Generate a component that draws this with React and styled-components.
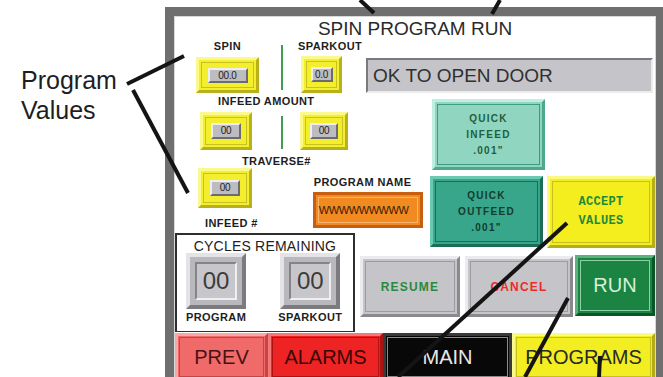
import React from "react";
import styled, { createGlobalStyle } from "styled-components";

const GlobalStyle = createGlobalStyle`
  body {
    margin: 0;
    background: #ffffff;
    font-family: "Liberation Sans", Arial, sans-serif;
    overflow: hidden;
  }
  * { box-sizing: border-box; }
`;

const Page = styled.div`
  position: relative;
  display: flex;
  width: 663px;
  height: 377px;
  overflow: hidden;
  background: #ffffff;
`;

const CalloutText = styled.div`
  width: 165px;
  flex-shrink: 0;
  padding: 65px 0 0 21px;
  font-size: 25px;
  line-height: 30px;
  color: #1e1e1e;
`;

const Panel = styled.div`
  flex: 1;
  margin-top: 7px;
  height: 390px;
  padding: 10px 8px 0 10px;
  background: #6f6f6f;
`;

const Screen = styled.div`
  height: 100%;
  background: #ffffff;
  box-shadow: 0 0 0 1px #d8d8d8;
  display: flex;
  flex-direction: column;
`;

const Title = styled.div`
  height: 23px;
  line-height: 23px;
  text-align: center;
  font-size: 19px;
  color: #2a2a2a;
`;

const Body = styled.div`
  display: grid;
  grid-template-columns: 183px 70px 227px;
  grid-template-rows: 55px 138px 17px 82px;
  grid-template-areas:
    "v1 st st"
    "lv lv qk"
    "cy . qk"
    "cy ac ac";
`;

const Area = styled.div`
  grid-area: ${(p) => p.$area};
  display: flex;
  flex-direction: ${(p) => p.$dir || "column"};
  align-items: flex-start;
  padding: ${(p) => p.$pad || "0"};
  & > * { flex-shrink: 0; }
`;

const Row = styled.div`
  display: flex;
  align-items: flex-start;
  margin-top: ${(p) => p.$top || 0}px;
  margin-left: ${(p) => p.$left || 0}px;
  gap: ${(p) => p.$gap || 0}px;
  & > * { flex-shrink: 0; }
`;

const Col = styled.div`
  display: flex;
  flex-direction: column;
  align-items: ${(p) => p.$align || "flex-start"};
  margin-left: ${(p) => p.$left || 0}px;
  width: ${(p) => (p.$w ? `${p.$w}px` : "auto")};
  flex-shrink: 0;
`;

const Label = styled.div`
  font-size: 11px;
  font-weight: bold;
  letter-spacing: 0.4px;
  line-height: 12px;
  color: #1e1e1e;
  white-space: nowrap;
  margin-top: ${(p) => p.$top || 0}px;
  margin-left: ${(p) => p.$left || 0}px;
`;

const Divider = styled.div`
  width: 2px;
  flex-shrink: 0;
  height: ${(p) => p.$h}px;
  margin-top: ${(p) => p.$top}px;
  margin-left: ${(p) => p.$left}px;
  background: #3f9c52;
`;

const ValueBox = styled.div`
  width: ${(p) => p.$w}px;
  height: ${(p) => p.$h}px;
  margin-top: ${(p) => p.$top || 0}px;
  margin-left: ${(p) => p.$left || 0}px;
  background: #f3ef2e;
  border: 3px solid;
  border-color: #fbf98e #b9b11c #b9b11c #fbf98e;
  box-shadow: inset 0 0 0 2px #f3ef2e, inset 0 0 0 3px #c9c120;
  display: flex;
  align-items: center;
  justify-content: center;
`;

const Display = styled.div`
  width: ${(p) => p.$w}px;
  height: ${(p) => p.$h}px;
  background: #bdbdc1;
  border: 2px solid;
  border-color: #eeeeee #6c6c70 #6c6c70 #eeeeee;
  font-size: 10px;
  line-height: ${(p) => p.$h - 4}px;
  text-align: center;
  color: #222222;
  letter-spacing: -0.3px;
`;

const HmiButton = styled.div`
  width: ${(p) => p.$w}px;
  height: ${(p) => p.$h}px;
  margin-top: ${(p) => p.$top || 0}px;
  margin-left: ${(p) => p.$left || 0}px;
  background: ${(p) => p.$bg};
  border: 3px solid;
  border-color: ${(p) => `${p.$light} ${p.$dark} ${p.$dark} ${p.$light}`};
  box-shadow: inset 0 0 0 2px ${(p) => p.$bg}, inset 0 0 0 3px ${(p) => p.$line};
  display: flex;
  flex-direction: column;
  align-items: center;
  justify-content: center;
  text-align: center;
  color: ${(p) => p.$color || "#222"};
  flex-shrink: 0;
`;

const Status = styled.div`
  width: 287px;
  height: 35px;
  margin: 18px 0 0 8px;
  background: #c5c5c9;
  border: 2px solid;
  border-color: #7a7a7e #ececec #ececec #7a7a7e;
  padding-left: 5px;
  font-size: 19px;
  line-height: 31px;
  color: #303030;
  white-space: nowrap;
`;

const NameText = styled.div`
  font-size: 11px;
  letter-spacing: -0.4px;
  color: #3a1a00;
  align-self: flex-start;
  margin-left: 3px;
`;

const QuickText = styled.div`
  font-size: 10px;
  font-weight: bold;
  letter-spacing: 1.3px;
  line-height: 16px;
  color: ${(p) => p.$color};
`;

const AcceptText = styled.div`
  font-family: "Liberation Mono", monospace;
  font-weight: bold;
  font-size: 12px;
  line-height: 19px;
  letter-spacing: 0.3px;
  color: #1f8a3a;
`;

const ActionText = styled.div`
  font-size: 12px;
  font-weight: bold;
  letter-spacing: 1.2px;
  color: ${(p) => p.$color};
`;

const RunText = styled.div`
  font-size: 20px;
  color: #d6f0d8;
`;

const CyclesBox = styled.div`
  grid-area: cy;
  width: 180px;
  height: 99px;
  border: 2px solid #2e2e2e;
  border-bottom-width: 1px;
  display: flex;
  flex-direction: column;
`;

const CyclesTitle = styled.div`
  margin-top: 4px;
  font-size: 14px;
  line-height: 14px;
  text-align: center;
  color: #222;
  letter-spacing: 0.2px;
`;

const CycleFrame = styled.div`
  width: 60px;
  height: 56px;
  background: #b9b9bd;
  border: 4px solid;
  border-color: #e4e4e6 #7c7c80 #7c7c80 #e4e4e6;
  padding: 5px;
`;

const CycleFace = styled.div`
  height: 100%;
  background: #c7c7cb;
  border: 2px solid;
  border-color: #858589 #efefef #efefef #858589;
  font-size: 24px;
  line-height: 34px;
  text-align: center;
  color: #3c3c3c;
`;

const Nav = styled.div`
  display: flex;
  margin-top: 1px;
`;

const NavButton = styled.div`
  width: ${(p) => p.$w}px;
  height: 48px;
  background: ${(p) => p.$bg};
  border: 3px solid;
  border-color: ${(p) => `${p.$light} ${p.$dark} ${p.$dark} ${p.$light}`};
  box-shadow: inset 0 0 0 1px ${(p) => p.$bg}, inset 0 0 0 2px ${(p) => p.$line};
  font-size: 20px;
  line-height: 42px;
  text-align: center;
  color: ${(p) => p.$color};
`;

const Callouts = styled.svg`
  position: absolute;
  left: 0;
  top: 0;
  pointer-events: none;
`;

const lines = [
  [127, 84, 184, 56],
  [133, 90, 188, 193],
  [360, 0, 374, 13],
  [500, 0, 492, 14],
  [567, 223, 398, 377],
  [568, 298, 525, 377],
  [600, 356, 599, 377],
];

const grayBtn = { $bg: "#c5c5c9", $light: "#ebebed", $dark: "#8a8a8e", $line: "#9c9ca0" };

export default function App() {
  return (
    <Page>
      <GlobalStyle />
      <CalloutText>
        Program
        <br />
        Values
      </CalloutText>
      <Panel>
        <Screen>
          <Title>SPIN PROGRAM RUN</Title>
          <Body>
            <Area $area="v1" $dir="row" $pad="0 0 0 21px">
              <Col $w={63} $align="center">
                <Label>SPIN</Label>
                <ValueBox $w={63} $h={36} $top={5}>
                  <Display $w={40} $h={15}>00.0</Display>
                </ValueBox>
              </Col>
              <Divider $h={45} $top={5} $left={22} />
              <Col $left={15} $w={64}>
                <Label>SPARKOUT</Label>
                <ValueBox $w={41} $h={37} $top={4} $left={3}>
                  <Display $w={22} $h={15}>0.0</Display>
                </ValueBox>
              </Col>
            </Area>

            <Area $area="st">
              <Status>OK TO OPEN DOOR</Status>
            </Area>

            <Area $area="lv">
              <Label $left={43}>INFEED AMOUNT</Label>
              <Row $top={5} $left={25}>
                <ValueBox $w={52} $h={38}>
                  <Display $w={30} $h={16}>00</Display>
                </ValueBox>
                <Divider $h={33} $top={4} $left={29} />
                <ValueBox $w={48} $h={38} $left={17}>
                  <Display $w={28} $h={16}>00</Display>
                </ValueBox>
              </Row>
              <Label $top={5} $left={67}>TRAVERSE#</Label>
              <Row $top={1} $left={23}>
                <Col>
                  <ValueBox $w={54} $h={40}>
                    <Display $w={30} $h={16}>00</Display>
                  </ValueBox>
                  <Label $top={9} $left={7}>INFEED #</Label>
                </Col>
                <Col $left={55}>
                  <Label $top={8} $left={1}>PROGRAM NAME</Label>
                  <HmiButton
                    $w={110}
                    $h={36}
                    $top={4}
                    $bg="#f28a22"
                    $light="#c65f10"
                    $dark="#c65f10"
                    $line="#f9b46e"
                  >
                    <NameText>WWWWWWWWW</NameText>
                  </HmiButton>
                </Col>
              </Row>
            </Area>

            <Area $area="qk" $pad="4px 0 0 0">
              <HmiButton
                $w={113}
                $h={71}
                $left={4}
                $bg="#8fd5bf"
                $light="#bfeee2"
                $dark="#4ea98b"
                $line="#3f9b7d"
              >
                <QuickText $color="#1f5f3f">QUICK</QuickText>
                <QuickText $color="#1f5f3f">INFEED</QuickText>
                <QuickText $color="#1f5f3f">.001"</QuickText>
              </HmiButton>
              <Row $top={6} $left={2} $gap={4}>
                <HmiButton
                  $w={113}
                  $h={71}
                  $bg="#38a68a"
                  $light="#6ccab2"
                  $dark="#1c6c56"
                  $line="#1b6d56"
                >
                  <QuickText $color="#123c2c">QUICK</QuickText>
                  <QuickText $color="#123c2c">OUTFEED</QuickText>
                  <QuickText $color="#123c2c">.001"</QuickText>
                </HmiButton>
                <HmiButton
                  $w={108}
                  $h={72}
                  $bg="#f4ee1e"
                  $light="#fafa82"
                  $dark="#b6ae18"
                  $line="#c8c020"
                >
                  <AcceptText>ACCEPT</AcceptText>
                  <AcceptText>VALUES</AcceptText>
                </HmiButton>
              </Row>
            </Area>

            <CyclesBox>
              <CyclesTitle>CYCLES REMAINING</CyclesTitle>
              <Row $left={9} $gap={32}>
                <Col $align="center">
                  <CycleFrame>
                    <CycleFace>00</CycleFace>
                  </CycleFrame>
                  <Label $top={2}>PROGRAM</Label>
                </Col>
                <Col $align="center">
                  <CycleFrame>
                    <CycleFace>00</CycleFace>
                  </CycleFrame>
                  <Label $top={2}>SPARKOUT</Label>
                </Col>
              </Row>
            </CyclesBox>

            <Area $area="ac" $dir="row" $pad="6px 0 0 2px">
              <HmiButton $w={100} $h={61} {...grayBtn}>
                <ActionText $color="#2a8a3c">RESUME</ActionText>
              </HmiButton>
              <HmiButton $w={108} $h={61} $left={5} {...grayBtn}>
                <ActionText $color="#ee2a2a">CANCEL</ActionText>
              </HmiButton>
              <HmiButton
                $w={80}
                $h={61}
                $left={2}
                $top={-1}
                $bg="#1b8443"
                $light="#5cb27c"
                $dark="#0b5628"
                $line="#8ed0a6"
              >
                <RunText>RUN</RunText>
              </HmiButton>
            </Area>
          </Body>
          <Nav>
            <NavButton $w={93} $bg="#f06a6a" $light="#f9a6a6" $dark="#c24646" $line="#c24646" $color="#4a1212">
              PREV
            </NavButton>
            <NavButton $w={115} $bg="#ee2424" $light="#f57878" $dark="#b01212" $line="#b01212" $color="#3a0505">
              ALARMS
            </NavButton>
            <NavButton $w={129} $bg="#080808" $light="#3a3a3a" $dark="#3a3a3a" $line="#8a8a8a" $color="#e8e8e8">
              MAIN
            </NavButton>
            <NavButton $w={143} $bg="#f2ee22" $light="#fafa86" $dark="#b4ac16" $line="#c8c020" $color="#2a2a2a">
              PROGRAMS
            </NavButton>
          </Nav>
        </Screen>
      </Panel>
      <Callouts width="663" height="377" viewBox="0 0 663 377">
        {lines.map(([x1, y1, x2, y2], i) => (
          <line key={i} x1={x1} y1={y1} x2={x2} y2={y2} stroke="#141414" strokeWidth="4" />
        ))}
      </Callouts>
    </Page>
  );
}
